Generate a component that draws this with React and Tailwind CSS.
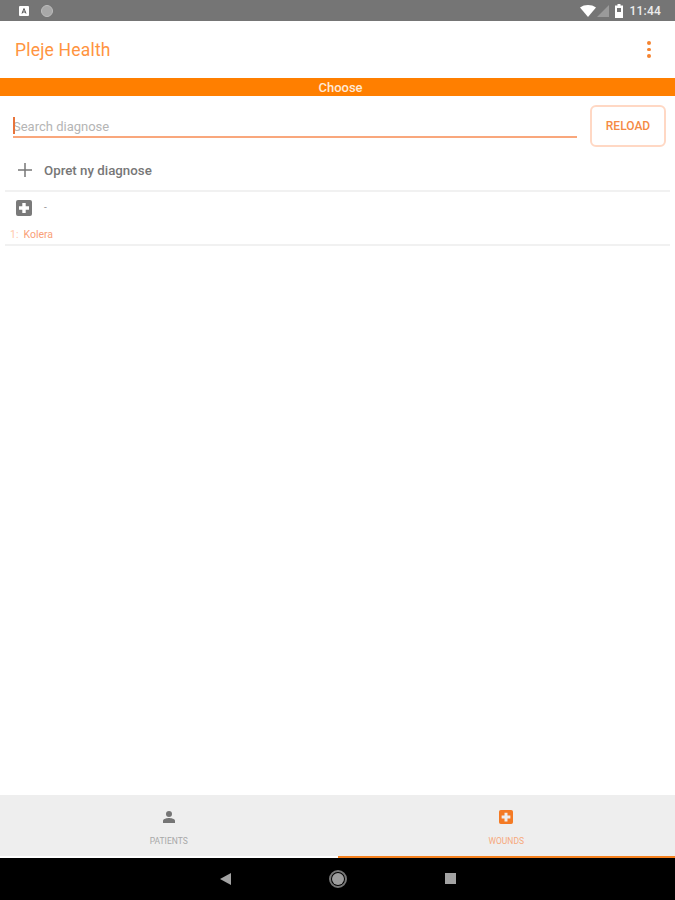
import React from "react";

const font = { fontFamily: "Roboto, 'Liberation Sans', sans-serif" };

function MedIcon({ className }) {
  return (
    <svg viewBox="0 0 16 16" className={className}>
      <path fill="currentColor" fillRule="evenodd" d="M2 0h12a2 2 0 0 1 2 2v12a2 2 0 0 1-2 2H2a2 2 0 0 1-2-2V2a2 2 0 0 1 2-2zM6.300 3v3.300H3v3.400h3.300V13h3.400V9.700h3.300V6.300H9.700V3z" />
    </svg>
  );
}

export default function App() {
  return (
    <div className="w-[675px] h-[900px] flex flex-col bg-white overflow-hidden" style={font}>
      {/* Status bar */}
      <div className="h-[21px] shrink-0 bg-[#757575] flex items-center justify-between pl-[19px] pr-[14px]">
        <div className="flex items-center gap-[12px]">
          <div className="w-[10px] h-[10px] bg-white rounded-[1px] flex items-center justify-center">
            <svg viewBox="0 0 10 10" className="w-[10px] h-[10px]">
              <path d="M3 7.500 5 2.500 7 7.500M3.800 6h2.400" fill="none" stroke="#555" strokeWidth="1" />
            </svg>
          </div>
          <div className="w-[12px] h-[12px] rounded-full bg-[#a8a8a8] border border-[#bdbdbd]" />
        </div>
        <div className="flex items-center">
          <svg viewBox="0 0 16 12" className="w-[16px] h-[12px]">
            <path d="M0 2.500C4.500-.8 11.500-.8 16 2.500L8 12z" fill="#fff" />
          </svg>
          <svg viewBox="0 0 12 12" className="w-[12px] h-[12px] ml-[1px]">
            <path d="M12 0v12H0z" fill="#9a9a9a" />
          </svg>
          <svg viewBox="0 0 8 14" className="w-[8px] h-[14px] ml-[6px]">
            <path fillRule="evenodd" d="M2.500 0h3v1.500H8V14H0V1.500h2.500zM2 4v4h4V4z" fill="#fff" />
          </svg>
          <span className="ml-[7px] text-[12px] leading-none font-medium text-[#ececec] tracking-[0.2px]">11:44</span>
        </div>
      </div>

      {/* App bar */}
      <div className="h-[57px] shrink-0 bg-white flex items-center justify-between pl-[15px] pr-[24px]">
        <span className="text-[17.500px] text-[#ff9440] tracking-[0.2px] mt-[1px]">Pleje Health</span>
        <div className="flex flex-col gap-[3px]">
          <div className="w-[4px] h-[3.500px] rounded-full bg-[#f58330]" />
          <div className="w-[4px] h-[3.500px] rounded-full bg-[#f58330]" />
          <div className="w-[4px] h-[3.500px] rounded-full bg-[#f58330]" />
        </div>
      </div>

      {/* Orange title */}
      <div className="h-[18px] shrink-0 bg-[#ff7f00] flex items-center justify-center text-[13px] font-medium leading-none text-[#ffe9d6] pl-[6px]">
        Choose
      </div>

      {/* Search row */}
      <div className="flex items-start pl-[13px] pr-[9px] pt-[9px] shrink-0">
        <div className="flex-1 h-[33px] border-b-2 border-[#f9a77c] flex items-center relative">
          <div className="absolute left-0 top-[12px] w-[2px] h-[17px] bg-[#e8743b]" />
          <span className="text-[13px] text-[#b5b5b5] pt-[12px]">Search diagnose</span>
        </div>
        <div className="ml-[13px] w-[76px] h-[42px] rounded-[6px] border-2 border-[#ffd8c4] flex items-center justify-center text-[12px] font-medium text-[#f58a45]">
          RELOAD
        </div>
      </div>

      {/* Create row */}
      <div className="mx-[5px] mt-[3px] h-[42px] shrink-0 flex items-center border-b-2 border-[#f1f1f1]">
        <svg viewBox="0 0 14 14" className="w-[14px] h-[14px] ml-[13px] text-[#777]">
          <path d="M7 0v14M0 7h14" stroke="currentColor" strokeWidth="1.500" fill="none" />
        </svg>
        <span className="ml-[12px] mt-[2px] text-[13.300px] font-medium text-[#777]">Opret ny diagnose</span>
      </div>

      {/* Group */}
      <div className="mx-[5px] h-[54px] shrink-0 border-b-2 border-[#f1f1f1] flex flex-col">
        <div className="flex items-center h-[31px] pl-[11px]">
          <MedIcon className="w-[16px] h-[16px] text-[#7a7a7a]" />
          <span className="ml-[12px] text-[10px] text-[#999] leading-none">-</span>
        </div>
        <div className="flex items-center mt-[7px] text-[10.500px] leading-none text-[#f9a077]">
          <span className="ml-[5px] text-[#ffc9ab]">1:</span>
          <span className="ml-[5px]">Kolera</span>
        </div>
      </div>

      <div className="flex-1" />

      {/* Bottom nav */}
      <div className="h-[63px] shrink-0 bg-[#eeeeee] grid grid-cols-2">
        <div className="flex flex-col items-center pt-[16px] border-b-2 border-white">
          <svg viewBox="0 0 12 12" className="w-[12px] h-[12px] text-[#757575]">
            <circle cx="6" cy="3" r="3" fill="currentColor" />
            <path d="M0 12V9.800C0 7.800 4 7 6 7s6 .8 6 2.800V12z" fill="currentColor" />
          </svg>
          <span className="mt-[8px] text-[8.500px] leading-none text-[#a8a8a8] pt-[6px]">PATIENTS</span>
        </div>
        <div className="flex flex-col items-center pt-[15px] border-b-2 border-[#f5811f]">
          <MedIcon className="w-[14px] h-[14px] text-[#f47a24]" />
          <span className="mt-[7px] text-[8.500px] leading-none text-[#f7a97c] pt-[6px]">WOUNDS</span>
        </div>
      </div>

      {/* Navigation bar */}
      <div className="h-[42px] shrink-0 bg-black flex items-center justify-center gap-[98px] pb-[1px]">
        <svg viewBox="0 0 11 12" className="w-[11px] h-[12px]">
          <path d="M11 0v12L0 6z" fill="#a3a3a3" />
        </svg>
        <div className="w-[18px] h-[18px] rounded-full border-2 border-[#777] flex items-center justify-center">
          <div className="w-[12px] h-[12px] rounded-full bg-[#9e9e9e]" />
        </div>
        <div className="w-[11px] h-[11px] bg-[#a3a3a3]" />
      </div>
    </div>
  );
}
